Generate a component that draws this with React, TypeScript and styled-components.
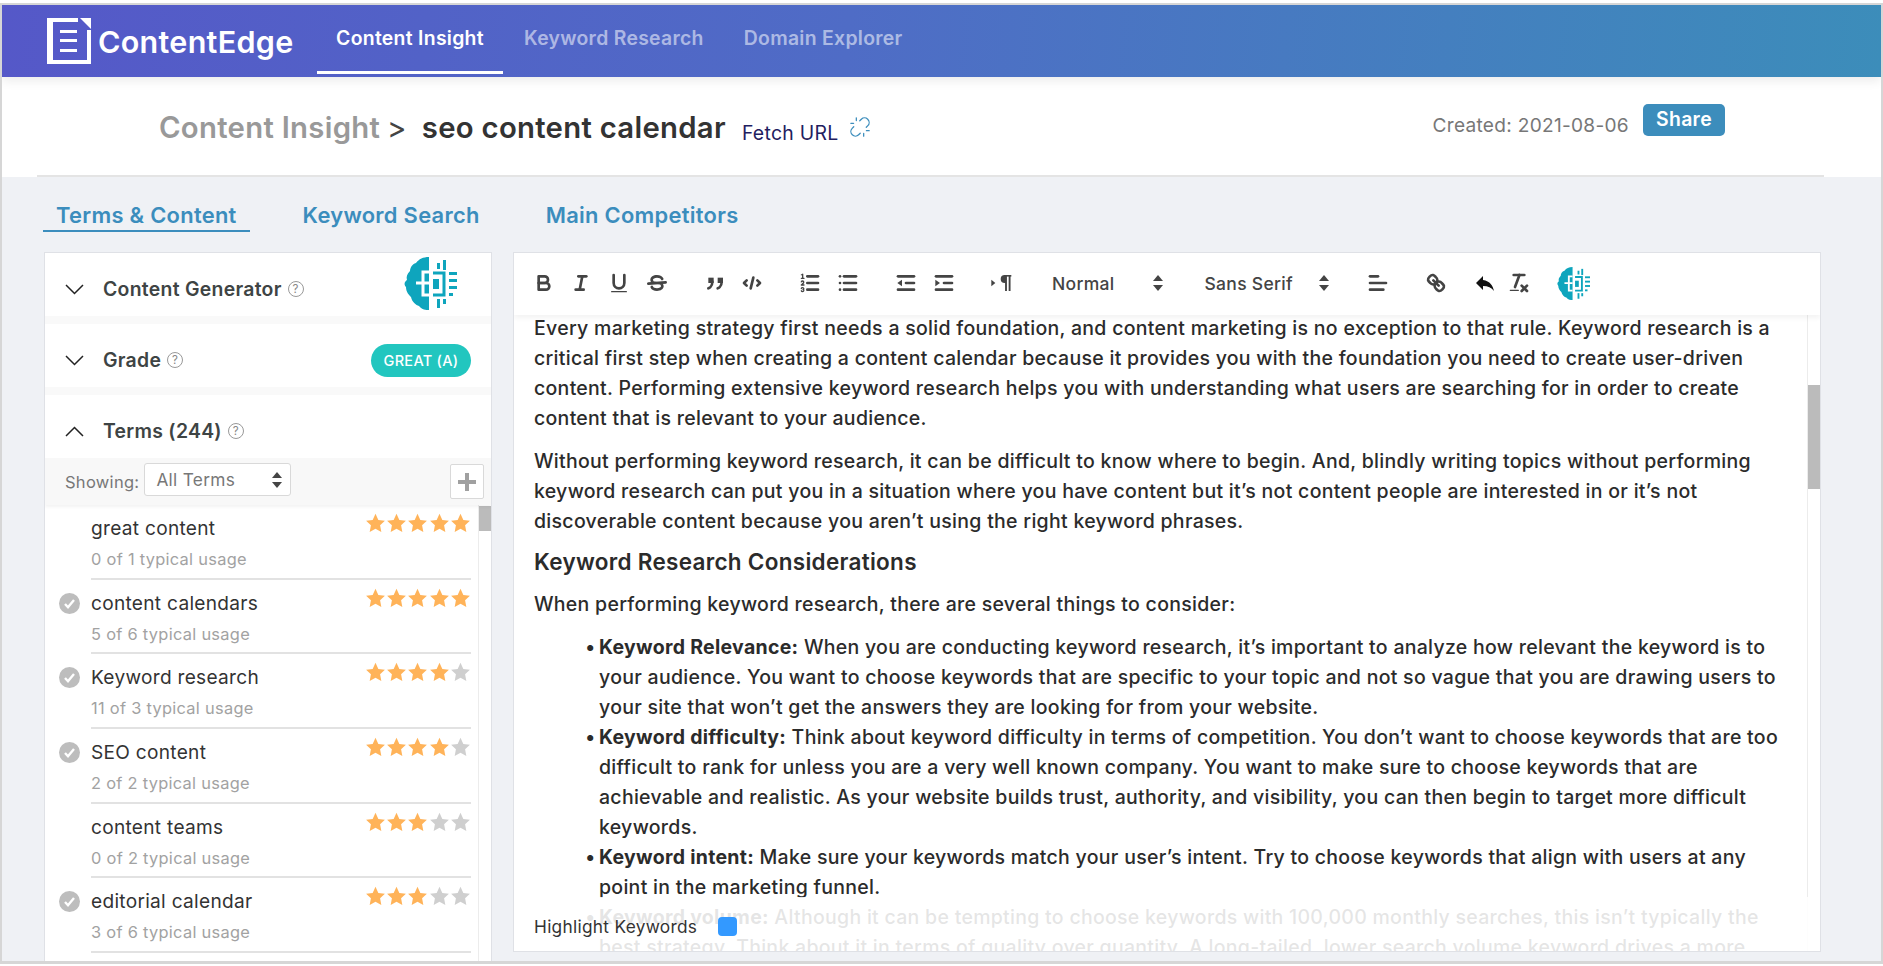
import React from "react";
import styled, { createGlobalStyle } from "styled-components";
import { Unlink } from "lucide-react";

const GlobalStyle = createGlobalStyle`
  html, body {
    margin: 0;
    padding: 0;
    background: #fff;
  }
  body {
    font-family: Inter, Lato, sans-serif;
    letter-spacing: 0.018em;
    color: #333;
  }
  * {
    box-sizing: border-box;
  }
`;

type Term = {
  name: string;
  usage: string;
  stars: number;
  done: boolean;
};

const terms: Term[] = [
  { name: "great content", usage: "0 of 1 typical usage", stars: 5, done: false },
  { name: "content calendars", usage: "5 of 6 typical usage", stars: 5, done: true },
  { name: "Keyword research", usage: "11 of 3 typical usage", stars: 4, done: true },
  { name: "SEO content", usage: "2 of 2 typical usage", stars: 4, done: true },
  { name: "content teams", usage: "0 of 2 typical usage", stars: 3, done: false },
  { name: "editorial calendar", usage: "3 of 6 typical usage", stars: 3, done: true },
];

const Frame = styled.div`
  margin-top: 3px;
  height: 961px;
  border: solid #d6d6d6;
  border-width: 2px 2px 3px 2px;
  overflow: hidden;
  display: flex;
  flex-direction: column;
`;

const Header = styled.header`
  flex: none;
  height: 72px;
  display: flex;
  align-items: stretch;
  padding-left: 45px;
  background: linear-gradient(95deg, #5558c8 0%, #4f6cc6 45%, #3c8dba 100%);
  box-shadow: 0 4px 10px rgba(0, 0, 0, 0.08);
  position: relative;
`;

const LogoBox = styled.div`
  display: flex;
  align-items: center;
  gap: 7px;
  width: 270px;
`;

const LogoText = styled.span`
  font-size: 30.5px;
  font-weight: 600;
  color: #fff;
`;

const NavItem = styled.a<{ $active?: boolean }>`
  width: ${(p) => (p.$active ? "186px" : "auto")};
  margin-right: ${(p) => (p.$active ? "21px" : "40px")};
  display: flex;
  justify-content: center;
  padding-top: 21px;
  font-size: 19.4px;
  font-weight: 600;
  color: ${(p) => (p.$active ? "#fff" : "rgba(255, 255, 255, 0.55)")};
  border-bottom: 3px solid ${(p) => (p.$active ? "#fff" : "transparent")};
  margin-bottom: 3px;
`;

const TitleBar = styled.div`
  flex: none;
  height: 100px;
  padding: 0 57px 0 35px;
  background: #fff;
`;

const TitleInner = styled.div`
  height: 100%;
  display: flex;
  align-items: flex-start;
  padding: 33px 99px 0 122px;
  border-bottom: 2px solid #e4e4e4;
`;

const Crumb = styled.span`
  font-size: 29.3px;
  font-weight: 600;
  color: #999;
`;

const Caret = styled.span`
  font-size: 29.3px;
  color: #444;
  margin: 0 15px 0 7px;
`;

const PageTitle = styled.h1`
  margin: 0;
  font-size: 29.3px;
  font-weight: 600;
  color: #333;
`;

const FetchLink = styled.a`
  font-size: 19.4px;
  color: #1f2060;
  margin: 11px 11px 0 16px;
`;

const FetchIcon = styled(Unlink)`
  margin-top: 6px;
  color: #3c8dbc;
`;

const Created = styled.span`
  margin-left: auto;
  margin-top: 3px;
  font-size: 19.1px;
  color: #777;
`;

const ShareButton = styled.button`
  margin-left: 14px;
  margin-top: -6px;
  width: 82px;
  height: 32px;
  padding: 0 0 3px;
  border: 0;
  border-radius: 5px;
  background: #3c8dbc;
  color: #fff;
  font-family: inherit;
  letter-spacing: inherit;
  font-size: 19.4px;
  font-weight: 600;
`;

const Main = styled.main`
  flex: 1;
  min-height: 0;
  background: #eff1f5;
  overflow: hidden;
`;

const Tabs = styled.nav`
  height: 75px;
  display: flex;
  align-items: flex-start;
  padding: 25px 0 0 41px;
  gap: 40px;
`;

const Tab = styled.a<{ $active?: boolean }>`
  height: 30px;
  padding: 0 13px;
  font-size: 21.9px;
  font-weight: 600;
  color: #3b8dbd;
  border-bottom: ${(p) => (p.$active ? "2px solid #3b8dbd" : "0")};
`;

const Panels = styled.div`
  display: flex;
  align-items: flex-start;
  gap: 21px;
  padding-left: 42px;
`;

const SidePanel = styled.aside`
  width: 448px;
  height: 709px;
  background: #fff;
  border: 1px solid #dfe1e6;
  border-bottom: 0;
  display: flex;
  flex-direction: column;
  overflow: hidden;
`;

const Section = styled.div<{ $gap?: boolean }>`
  flex: none;
  height: 63px;
  display: flex;
  align-items: center;
  padding: 9px 20px 0 20px;
  margin-bottom: ${(p) => (p.$gap ? "8px" : "0")};
  position: relative;
  box-shadow: ${(p) => (p.$gap ? "0 8px 0 #f9f9f9" : "none")};
`;

const Chevron = styled.svg`
  width: 19px;
  height: 11px;
  margin-right: 19px;
  fill: none;
  stroke: #222;
  stroke-width: 1.5;
`;

const SectionLabel = styled.span`
  font-size: 19.4px;
  font-weight: 600;
  color: #3e4444;
`;

const HelpMark = styled.span`
  flex: none;
  width: 16px;
  height: 16px;
  margin-left: 6px;
  border: 1.5px solid #999;
  border-radius: 50%;
  display: inline-flex;
  align-items: center;
  justify-content: center;
  font-size: 11.5px;
  color: #888;
`;

const BrainSlot = styled.div`
  margin-left: auto;
  margin-right: 14px;
  margin-top: -12px;
  display: flex;
`;

const GradeBadge = styled.span`
  margin-left: auto;
  width: 100px;
  height: 33px;
  border-radius: 17px;
  background: #22c6bf;
  color: #fff;
  font-size: 14.5px;
  font-weight: 500;
  display: flex;
  align-items: center;
  justify-content: center;
`;

const FilterBar = styled.div`
  flex: none;
  height: 47px;
  display: flex;
  align-items: center;
  padding: 0 7px 0 20px;
  background: #f8f8f8;
  box-shadow: 0 2px 3px rgba(0, 0, 0, 0.05);
  position: relative;
`;

const FilterLabel = styled.span`
  font-size: 16.5px;
  color: #777;
  margin-right: 5px;
`;

const FilterSelect = styled.div`
  width: 147px;
  height: 33px;
  margin-top: -4px;
  padding: 0 8px 0 11px;
  display: flex;
  align-items: center;
  justify-content: space-between;
  background: #fff;
  border: 1px solid #d9d9d9;
  border-radius: 3px;
  font-size: 17.3px;
  color: #777;
`;

const AddButton = styled.button`
  margin-left: auto;
  width: 34px;
  height: 35px;
  padding: 0;
  background: #fff;
  border: 1px solid #d9d9d9;
  border-radius: 2px;
  color: #999;
  display: flex;
  align-items: center;
  justify-content: center;
`;

const TermScroller = styled.div`
  flex: 1;
  min-height: 0;
  display: flex;
`;

const TermList = styled.ul`
  flex: 1;
  margin: 0;
  padding: 0;
  list-style: none;
`;

const TermRow = styled.li`
  height: 74.7px;
  display: flex;
  padding-left: 14px;
  padding-right: 7px;
`;

const CheckSlot = styled.div`
  flex: none;
  width: 32px;
  padding-top: 13px;
`;

const CheckDot = styled.span`
  width: 21px;
  height: 21px;
  border-radius: 50%;
  background: #bdbdbd;
  display: flex;
  align-items: center;
  justify-content: center;
`;

const TermBody = styled.div`
  flex: 1;
  border-bottom: 2px solid #e2e2e2;
  display: flex;
  justify-content: space-between;
  align-items: flex-start;
`;

const TermName = styled.div`
  font-size: 19.1px;
  line-height: 24px;
  margin-top: 11px;
  color: #333;
`;

const TermUsage = styled.div`
  font-size: 16.4px;
  line-height: 22px;
  margin-top: 8px;
  color: #a2a2a2;
`;

const StarRow = styled.div`
  display: flex;
  gap: 0.3px;
  margin-top: 8px;
`;

const ScrollTrack = styled.div<{ $width: number }>`
  flex: none;
  width: ${(p) => p.$width}px;
  background: #fff;
  border-left: 1px solid #ececec;
`;

const ScrollThumb = styled.div<{ $top: number; $height: number }>`
  height: ${(p) => p.$height}px;
  margin-top: ${(p) => p.$top}px;
  background: #bbb;
`;

const Editor = styled.section`
  width: 1308px;
  height: 700px;
  background: #fff;
  border: 1px solid #dfe1e6;
  display: flex;
  flex-direction: column;
  position: relative;
  overflow: hidden;
`;

const Toolbar = styled.div`
  flex: none;
  height: 62px;
  display: flex;
  align-items: center;
  gap: 20.5px;
  padding: 0 0 2px 11px;
  box-shadow: 0 3px 5px rgba(0, 0, 0, 0.05);
  position: relative;
  z-index: 1;
  background: #fff;
`;

const ToolGroup = styled.div`
  display: flex;
  align-items: center;
`;

const ToolButton = styled.span<{ $shift?: number }>`
  width: 37.6px;
  margin-left: ${(p) => p.$shift ?? 0}px;
  display: flex;
  align-items: center;
  justify-content: center;
`;

const QuillIcon = styled.svg.attrs({ viewBox: "0 0 18 18" })`
  width: 24px;
  height: 24px;
  fill: none;
  stroke: #444;
  stroke-width: 2;
  stroke-linecap: round;
  stroke-linejoin: round;
  .fill {
    fill: #444;
    stroke: none;
  }
  .thin {
    stroke-width: 1;
  }
`;

const Picker = styled.div<{ $width: number }>`
  width: ${(p) => p.$width}px;
  display: flex;
  align-items: center;
  justify-content: space-between;
  padding-left: 11px;
  padding-right: 10px;
  font-size: 17.5px;
  font-weight: 500;
  color: #444;
`;

const EditorBody = styled.div`
  flex: 1;
  min-height: 0;
  display: flex;
`;

const Article = styled.article`
  flex: 1;
  margin-top: -2px;
  padding: 0 20px;
  font-size: 19.5px;
  line-height: 30px;
  font-weight: 500;
  color: #2b2b2b;
  p {
    margin: 0 0 13px;
  }
  h3 {
    margin: -2px 0 12px;
    font-size: 22.5px;
    line-height: 30px;
    font-weight: 600;
  }
  ul {
    margin: 0;
    padding-left: 65px;
    list-style: none;
  }
  li {
    position: relative;
  }
  li::before {
    content: "•";
    position: absolute;
    left: -14px;
  }
  b {
    font-weight: 700;
  }
`;

const HighlightBar = styled.div`
  position: absolute;
  left: 0;
  right: 0;
  bottom: 0;
  height: 54px;
  padding: 4px 0 0 20px;
  display: flex;
  align-items: center;
  gap: 21px;
  background: rgba(255, 255, 255, 0.88);
  font-size: 17.3px;
  color: #333;
`;

const Swatch = styled.span`
  width: 19px;
  height: 19px;
  border-radius: 4px;
  background: #3399ff;
`;

const LogoMark = () => (
  <svg width="44" height="46" viewBox="0 0 44 46" fill="#fff">
    <path d="M0 0H31V4H6V42H40V12H44V46H0Z" />
    <path d="M33 0H44V11Z" />
    <rect x="13" y="12" width="17" height="3" />
    <rect x="13" y="21" width="17" height="3" />
    <rect x="13" y="31" width="17" height="3" />
  </svg>
);

const BrainIcon = ({ size }: { size: number }) => (
  <svg width={size} height={size} viewBox="0 0 53 53" fill="#0ea5bd">
    <path d="M25 0C19 0 15 2 12 6C8 7 6 11 6 14C3 17 2 20 3 23C0 25 0 28 2 30C2 35 5 38 7 40C8 45 12 48 15 49C18 53 22 53 25 53Z" />
    <path d="M12 26H25M19 26V15H25M19 26V38H25" fill="none" stroke="#fff" strokeWidth="3" />
    <path d="M29 16H40V38H29" fill="none" stroke="#0ea5bd" strokeWidth="3" />
    <rect x="29" y="22" width="6" height="10" />
    <rect x="33" y="6" width="3" height="6" />
    <rect x="39" y="3" width="3" height="10" />
    <rect x="33" y="42" width="3" height="9" />
    <rect x="39" y="42" width="3" height="5" />
    <rect x="45" y="15" width="8" height="3" />
    <rect x="45" y="22" width="8" height="3" />
    <rect x="45" y="29" width="8" height="3" />
    <rect x="45" y="36" width="4" height="3" />
  </svg>
);

const StackArrows = () => (
  <svg width="10" height="16" viewBox="0 0 10 16" fill="#444">
    <path d="M5 0L10 6H0Z" />
    <path d="M5 16L0 10H10Z" />
  </svg>
);

const Star = ({ on }: { on: boolean }) => (
  <svg width="21" height="20" viewBox="0 0 24 24" fill={on ? "#ffb359" : "#cfcfcf"}>
    <path d="M12 1l3.4 7.3 7.9 1-5.8 5.5 1.5 7.9-7-3.9-7 3.9 1.5-7.9L.7 9.3l7.9-1z" />
  </svg>
);

const Help = () => <HelpMark>?</HelpMark>;

const Down = () => (
  <Chevron viewBox="0 0 19 11">
    <path d="M1 1l8.5 8.5L18 1" />
  </Chevron>
);

const Up = () => (
  <Chevron viewBox="0 0 19 11">
    <path d="M1 10l8.5-8.5L18 10" />
  </Chevron>
);

const Scrollbar = ({ width, top, height }: { width: number; top: number; height: number }) => (
  <ScrollTrack $width={width}>
    <ScrollThumb $top={top} $height={height} />
  </ScrollTrack>
);

const Tool = ({ children }: { children: React.ReactNode }) => (
  <ToolButton>
    <QuillIcon>{children}</QuillIcon>
  </ToolButton>
);

const EditorToolbar = () => (
  <Toolbar>
    <ToolGroup>
      <Tool>
        <path d="M5,4H9.5A2.5,2.5,0,0,1,12,6.5v0A2.5,2.5,0,0,1,9.5,9H5V4Z" />
        <path d="M5,9h5.5A2.5,2.5,0,0,1,13,11.5v0A2.5,2.5,0,0,1,10.5,14H5V9Z" />
      </Tool>
      <Tool>
        <line x1="7" x2="13" y1="4" y2="4" />
        <line x1="5" x2="11" y1="14" y2="14" />
        <line x1="8" x2="10" y1="14" y2="4" />
      </Tool>
      <Tool>
        <path d="M5,3V9a4.012,4.012,0,0,0,4,4H9a4.012,4.012,0,0,0,4-4V3" />
        <rect className="fill" x="3" y="15" width="12" height="1" rx="0.5" />
      </Tool>
      <Tool>
        <line x1="15.5" x2="2.5" y1="8.5" y2="9.5" />
        <path className="fill" d="M9.007,8C6.542,7.791,6,7.519,6,6.5,6,5.792,7.283,5,9,5c1.571,0,2.765.679,2.969,1.309a1,1,0,0,0,1.9-.617C13.356,4.106,11.354,3,9,3,6.2,3,4,4.538,4,6.5a3.2,3.2,0,0,0,.5,1.843Z" />
        <path className="fill" d="M8.984,10C11.457,10.208,12,10.479,12,11.5c0,.708-1.283,1.5-3,1.5-1.571,0-2.765-.679-2.969-1.309a1,1,0,1,0-1.9.617C4.644,13.894,6.646,15,9,15c2.8,0,5-1.538,5-3.5a3.2,3.2,0,0,0-.5-1.843Z" />
      </Tool>
    </ToolGroup>
    <ToolGroup>
      <Tool>
        <rect className="fill" x="4" y="5" width="4" height="4" />
        <rect className="fill" x="11" y="5" width="4" height="4" />
        <path d="M7,8c0,4.031-3,5-3,5" />
        <path d="M14,8c0,4.031-3,5-3,5" />
      </Tool>
      <Tool>
        <polyline points="5 7 3 9 5 11" />
        <polyline points="13 7 15 9 13 11" />
        <line x1="10" x2="8" y1="5" y2="13" />
      </Tool>
    </ToolGroup>
    <ToolGroup>
      <Tool>
        <line x1="7" x2="15" y1="4" y2="4" />
        <line x1="7" x2="15" y1="9" y2="9" />
        <line x1="7" x2="15" y1="14" y2="14" />
        <line className="thin" x1="2.5" x2="4.5" y1="5.5" y2="5.5" />
        <path className="fill" d="M3.5,6A0.5,0.5,0,0,1,3,5.5V3.085l-0.276.138A0.5,0.5,0,0,1,2.053,3c-0.124-.247-0.023-0.324.224-0.447l1-.5A0.5,0.5,0,0,1,4,2.5v3A0.5,0.5,0,0,1,3.5,6Z" />
        <path className="thin" d="M4.5,10.5h-2c0-.234,1.85-1.076,1.85-2.234A0.959,0.959,0,0,0,2.5,8.156" />
        <path className="thin" d="M2.5,14.846a0.959,0.959,0,0,0,1.85-.109A0.7,0.7,0,0,0,3.75,14a0.688,0.688,0,0,0,.6-0.736,0.959,0.959,0,0,0-1.85-.109" />
      </Tool>
      <Tool>
        <line x1="6" x2="15" y1="4" y2="4" />
        <line x1="6" x2="15" y1="9" y2="9" />
        <line x1="6" x2="15" y1="14" y2="14" />
        <line x1="3" x2="3" y1="4" y2="4" />
        <line x1="3" x2="3" y1="9" y2="9" />
        <line x1="3" x2="3" y1="14" y2="14" />
      </Tool>
    </ToolGroup>
    <ToolGroup>
      <Tool>
        <line x1="3" x2="15" y1="14" y2="14" />
        <line x1="3" x2="15" y1="4" y2="4" />
        <line x1="9" x2="15" y1="9" y2="9" />
        <polygon className="fill" points="6 6.5 6 11.5 2.5 9" />
      </Tool>
      <Tool>
        <line x1="3" x2="15" y1="14" y2="14" />
        <line x1="3" x2="15" y1="4" y2="4" />
        <line x1="9" x2="15" y1="9" y2="9" />
        <polygon className="fill" points="2.5 6.5 2.5 11.5 6 9" />
      </Tool>
    </ToolGroup>
    <ToolGroup>
      <Tool>
        <polygon className="fill" points="1 11.5 4 9 1 6.5" />
        <path className="fill" d="M11,3a3,3,0,0,0,0,6h1V3H11Z" />
        <rect className="fill" x="10.5" y="3" width="5.5" height="1.2" />
        <rect className="fill" x="11.3" y="3" width="1.4" height="12" />
        <rect className="fill" x="14" y="3" width="1.4" height="12" />
      </Tool>
    </ToolGroup>
    <ToolGroup>
      <Picker $width={132}>
        Normal
        <StackArrows />
      </Picker>
    </ToolGroup>
    <ToolGroup>
      <Picker $width={145}>
        Sans Serif
        <StackArrows />
      </Picker>
    </ToolGroup>
    <ToolGroup>
      <Tool>
        <line x1="3" x2="15" y1="9" y2="9" />
        <line x1="3" x2="13" y1="14" y2="14" />
        <line x1="3" x2="9" y1="4" y2="4" />
      </Tool>
    </ToolGroup>
    <ToolGroup>
      <Tool>
        <line x1="7" x2="11" y1="7" y2="11" />
        <path d="M8.9,4.577a3.476,3.476,0,0,1,.36,4.679A3.476,3.476,0,0,1,4.577,8.9C3.185,7.5,2.035,6.4,4.217,4.217S7.5,3.185,8.9,4.577Z" />
        <path d="M13.423,9.1a3.476,3.476,0,0,0-4.679-.36,3.476,3.476,0,0,0,.36,4.679c1.392,1.392,2.5,2.542,4.679.36S14.815,10.5,13.423,9.1Z" />
      </Tool>
      <ToolButton $shift={11}>
        <svg width="24" height="24" viewBox="0 0 24 24" fill="#111">
          <path d="M10 9V5l-7 7 7 7v-4.1c5 0 8.5 1.6 11 5.1-1-5-4-10-11-11z" />
        </svg>
      </ToolButton>
      <ToolButton $shift={-3}>
        <QuillIcon>
          <line x1="5" x2="13" y1="3" y2="3" />
          <line x1="6" x2="9.35" y1="12" y2="3" />
          <line x1="11" x2="15" y1="11" y2="15" />
          <line x1="15" x2="11" y1="11" y2="15" />
          <rect className="fill" x="2" y="14" width="7" height="1" rx="0.5" />
        </QuillIcon>
      </ToolButton>
      <ToolButton $shift={17}>
        <BrainIcon size={33} />
      </ToolButton>
    </ToolGroup>
  </Toolbar>
);

const App = () => (
  <>
    <GlobalStyle />
    <Frame>
      <Header>
        <LogoBox>
          <LogoMark />
          <LogoText>ContentEdge</LogoText>
        </LogoBox>
        <NavItem $active>Content Insight</NavItem>
        <NavItem>Keyword Research</NavItem>
        <NavItem>Domain Explorer</NavItem>
      </Header>

      <TitleBar>
        <TitleInner>
          <Crumb>Content Insight</Crumb>
          <Caret>&gt;</Caret>
          <PageTitle>seo content calendar</PageTitle>
          <FetchLink>Fetch URL</FetchLink>
          <FetchIcon size={22} strokeWidth={1.4} />
          <Created>Created: 2021-08-06</Created>
          <ShareButton>Share</ShareButton>
        </TitleInner>
      </TitleBar>

      <Main>
        <Tabs>
          <Tab $active>Terms &amp; Content</Tab>
          <Tab>Keyword Search</Tab>
          <Tab>Main Competitors</Tab>
        </Tabs>

        <Panels>
          <SidePanel>
            <Section $gap>
              <Down />
              <SectionLabel>Content Generator</SectionLabel>
              <Help />
              <BrainSlot>
                <BrainIcon size={53} />
              </BrainSlot>
            </Section>
            <Section $gap>
              <Down />
              <SectionLabel>Grade</SectionLabel>
              <Help />
              <GradeBadge>GREAT (A)</GradeBadge>
            </Section>
            <Section>
              <Up />
              <SectionLabel>Terms (244)</SectionLabel>
              <Help />
            </Section>
            <FilterBar>
              <FilterLabel>Showing:</FilterLabel>
              <FilterSelect>
                All Terms
                <StackArrows />
              </FilterSelect>
              <AddButton>
                <svg width="22" height="22" viewBox="0 0 22 22" fill="#a0a0a0">
                  <rect x="9" y="2" width="4" height="18" />
                  <rect x="2" y="9" width="18" height="4" />
                </svg>
              </AddButton>
            </FilterBar>
            <TermScroller>
              <TermList>
                {terms.map((term) => (
                  <TermRow key={term.name}>
                    <CheckSlot>
                      {term.done && (
                        <CheckDot>
                          <svg width="13" height="13" viewBox="0 0 13 13" fill="none" stroke="#fff" strokeWidth="2.4">
                            <path d="M2 7l3 3.2L11 3" />
                          </svg>
                        </CheckDot>
                      )}
                    </CheckSlot>
                    <TermBody>
                      <div>
                        <TermName>{term.name}</TermName>
                        <TermUsage>{term.usage}</TermUsage>
                      </div>
                      <StarRow>
                        {[1, 2, 3, 4, 5].map((n) => (
                          <Star key={n} on={n <= term.stars} />
                        ))}
                      </StarRow>
                    </TermBody>
                  </TermRow>
                ))}
              </TermList>
              <Scrollbar width={13} top={1} height={25} />
            </TermScroller>
          </SidePanel>

          <Editor>
            <EditorToolbar />
            <EditorBody>
              <Article>
                <p>
                  Every marketing strategy first needs a solid foundation, and content marketing is no exception to that rule. Keyword research is a critical first step when creating a content calendar because it provides you with the foundation you need to create user-driven content. Performing extensive keyword research helps you with understanding what users are searching for in order to create content that is relevant to your audience.
                </p>
                <p>
                  Without performing keyword research, it can be difficult to know where to begin. And, blindly writing topics without performing keyword research can put you in a situation where you have content but it’s not content people are interested in or it’s not discoverable content because you aren’t using the right keyword phrases.
                </p>
                <h3>Keyword Research Considerations</h3>
                <p>When performing keyword research, there are several things to consider:</p>
                <ul>
                  <li>
                    <b>Keyword Relevance:</b> When you are conducting keyword research, it’s important to analyze how relevant the keyword is to your audience. You want to choose keywords that are specific to your topic and not so vague that you are drawing users to your site that won’t get the answers they are looking for from your website.
                  </li>
                  <li>
                    <b>Keyword difficulty:</b> Think about keyword difficulty in terms of competition. You don’t want to choose keywords that are too difficult to rank for unless you are a very well known company. You want to make sure to choose keywords that are achievable and realistic. As your website builds trust, authority, and visibility, you can then begin to target more difficult keywords.
                  </li>
                  <li>
                    <b>Keyword intent:</b> Make sure your keywords match your user’s intent. Try to choose keywords that align with users at any point in the marketing funnel.
                  </li>
                  <li>
                    <b>Keyword volume:</b> Although it can be tempting to choose keywords with 100,000 monthly searches, this isn’t typically the best strategy. Think about it in terms of quality over quantity. A long-tailed, lower search volume keyword drives a more
                  </li>
                </ul>
              </Article>
              <Scrollbar width={13} top={70} height={104} />
            </EditorBody>
            <HighlightBar>
              Highlight Keywords
              <Swatch />
            </HighlightBar>
          </Editor>
        </Panels>
      </Main>
    </Frame>
  </>
);

export default App;
